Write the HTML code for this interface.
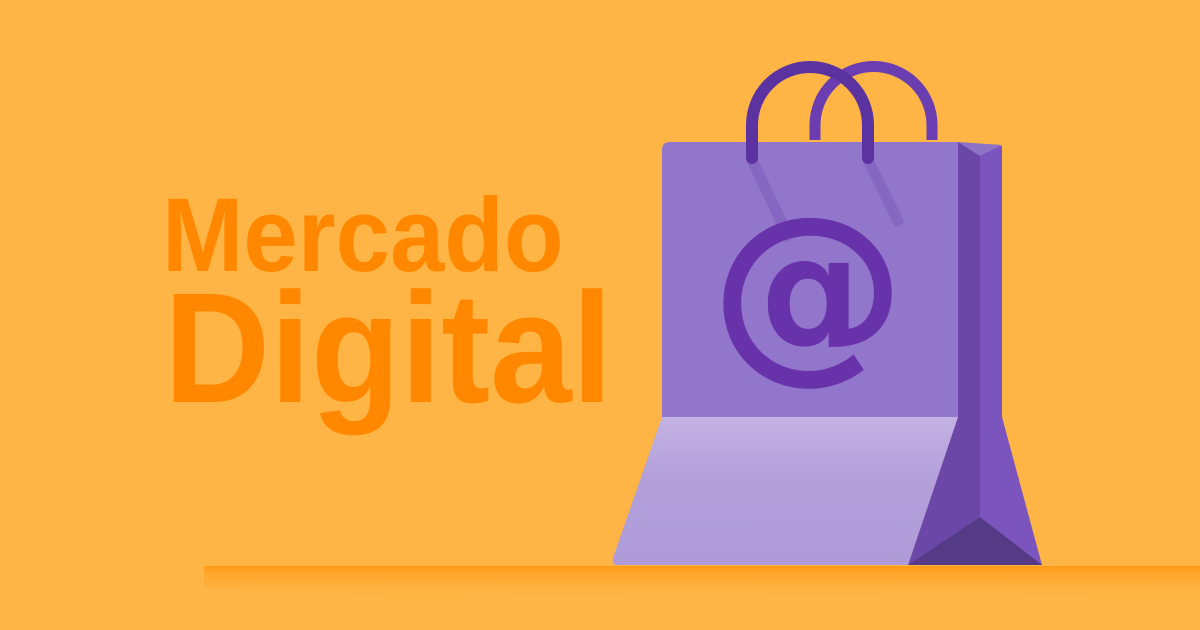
<!DOCTYPE html>
<html><head><meta charset="utf-8"><style>
html,body{margin:0;padding:0}
body{width:1200px;height:630px;background:#FFB545;position:relative;overflow:hidden;font-family:"Liberation Sans",sans-serif}
.t{position:absolute;color:#FF8800;font-weight:bold;white-space:nowrap;transform-origin:0 0;line-height:1}
</style></head><body>
<svg width="1200" height="630" style="position:absolute;left:0;top:0">
<defs>
<linearGradient id="fl" x1="0" y1="0" x2="0" y2="1">
<stop offset="0" stop-color="#FF960F" stop-opacity="0.8"/><stop offset="1" stop-color="#FFB545" stop-opacity="0"/>
</linearGradient>
<linearGradient id="lf" x1="0" y1="0" x2="0" y2="1">
<stop offset="0" stop-color="#C4B2E4"/><stop offset="0.4" stop-color="#B3A0DB"/><stop offset="1" stop-color="#AE9BD8"/>
</linearGradient>
</defs>
<path d="M204 566 L1200 566 L1200 596 Q700 612 204 588 Z" fill="url(#fl)"/>
<!-- back handle -->
<path d="M815 140 L815 125 A58.5 58.5 0 0 1 932 125 L932 140" fill="none" stroke="#6A3DB0" stroke-width="11"/>
<!-- side panel -->
<path d="M958 142 L1002 146 L1002 417 L1042 565 L908 565 L958 417 Z" fill="#7B55BD"/>
<path d="M958 142 L980 155 L980 517 L908 565 L958 417 Z" fill="#6B47A8"/>
<path d="M980 517 L1042 565 L908 565 Z" fill="#553A85"/>
<path d="M958 142 L980 156 L1002 145 Z" fill="#8E72C5"/>
<!-- front -->
<path d="M670 142 L958 142 L958 417 L662 417 L662 150 Q662 142 670 142 Z" fill="#9276CB"/>
<path d="M662 417 L958 417 L908 565 L618 565 Q611 565 613 558 Z" fill="url(#lf)"/>
<!-- handle shadows -->
<path d="M752 160 L790 240" stroke="#7D5EBC" stroke-width="11" opacity="0.6"/>
<path d="M868 160 L900 225" stroke="#7D5EBC" stroke-width="11" opacity="0.6"/>
<!-- front handle -->
<path d="M752 158 L752 125 A58 58 0 0 1 868 125 L868 158" fill="none" stroke="#5B33A0" stroke-width="12" stroke-linecap="round"/>
<text x="808" y="355" text-anchor="middle" font-family="DejaVu Sans,sans-serif" font-weight="bold" font-size="195" fill="#6833AA">@</text>
</svg>
<div class="t" style="left:162px;top:183px;font-size:105px;transform:scaleX(0.93)">Mercado</div>
<div class="t" style="left:164px;top:270px;font-size:157px;transform:scaleX(0.935)">Digital</div>
</body></html>
